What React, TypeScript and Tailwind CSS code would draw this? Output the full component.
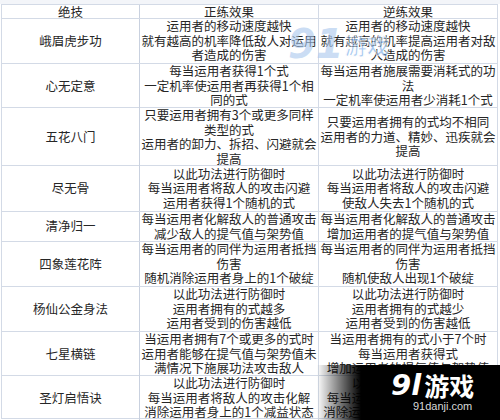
import React from 'react';

type Row = {
    name: string;
    zheng: string[];
    ni: string[];
    h: string;
};

const rows: Row[] = [
    {
        name: '峨眉虎步功',
        zheng: ['运用者的移动速度越快', '就有越高的机率降低敌人对运用', '者造成的伤害'],
        ni: ['运用者的移动速度越快', '就有越高的机率提高运用者对敌', '人造成的伤害'],
        h: 'h-[45px]',
    },
    {
        name: '心无定意',
        zheng: ['每当运用者获得1个式', '一定机率使运用者再获得1个相', '同的式'],
        ni: ['每当运用者施展需要消耗式的功', '法', '一定机率使运用者少消耗1个式'],
        h: 'h-[44px]',
    },
    {
        name: '五花八门',
        zheng: ['只要运用者拥有3个或更多同样', '类型的式', '运用者的卸力、拆招、闪避就会', '提高'],
        ni: ['只要运用者拥有的式均不相同', '运用者的力道、精妙、迅疾就会', '提高'],
        h: 'h-[58px]',
    },
    {
        name: '尽无骨',
        zheng: ['以此功法进行防御时', '每当运用者将敌人的攻击闪避', '运用者获得1个随机的式'],
        ni: ['以此功法进行防御时', '每当运用者将敌人的攻击闪避', '使敌人失去1个随机的式'],
        h: 'h-[46px]',
    },
    {
        name: '清净归一',
        zheng: ['每当运用者化解敌人的普通攻击', '减少敌人的提气值与架势值'],
        ni: ['每当运用者化解敌人的普通攻击', '增加运用者的提气值与架势值'],
        h: 'h-[30px]',
    },
    {
        name: '四象莲花阵',
        zheng: ['每当运用者的同伴为运用者抵挡', '伤害', '随机消除运用者身上的1个破绽'],
        ni: ['每当运用者的同伴为运用者抵挡', '伤害', '随机使敌人出现1个破绽'],
        h: 'h-[45px]',
    },
    {
        name: '杨仙公金身法',
        zheng: ['以此功法进行防御时', '运用者拥有的式越多', '运用者受到的伤害越低'],
        ni: ['以此功法进行防御时', '运用者拥有的式越少', '运用者受到的伤害越低'],
        h: 'h-[45px]',
    },
    {
        name: '七星横链',
        zheng: ['当运用者拥有7个或更多的式时', '运用者能够在提气值与架势值未', '满情况下施展功法攻击敌人'],
        ni: ['当运用者拥有的式小于7个时', '每当运用者获得式', '增加运用者的提气值与架势值'],
        h: 'h-[44px]',
    },
    {
        name: '圣灯启悟诀',
        zheng: ['以此功法进行防御时', '每当运用者将敌人的攻击化解', '消除运用者身上的1个减益状态'],
        ni: ['以此功法进行防御时', '每当运用者将敌人的攻击化解', '消除运用者身上的1个减益状态'],
        h: 'h-[43px]',
    },
];

function Cell({ lines }: { lines: string[] }) {
    return (
        <div className="flex flex-col items-center justify-center border-r border-[#d3dae6] text-center">
            {lines.map((line, i) => (
                <div key={i} className="whitespace-nowrap">
                    {line}
                </div>
            ))}
        </div>
    );
}

export default function App() {
    return (
        <div className="relative h-[420px] w-[500px] overflow-hidden bg-white font-['Noto_Sans_CJK_SC','Noto_Sans',sans-serif] text-[12.5px] leading-[14.5px] text-[#262626]">
            <div className="h-[4px] bg-[#f3f5f9]" />
            <div className="ml-[1px] w-[497px] border-b border-l border-[#d3dae6]">
                <div className="grid h-[14px] grid-cols-[138px_179px_179px] border-t border-[#d3dae6] leading-[13px]">
                    <div className="flex items-center justify-center border-r border-[#c9d1df]">绝技</div>
                    <div className="flex items-center justify-center border-r border-[#d3dae6]">正练效果</div>
                    <div className="flex items-center justify-center border-r border-[#d3dae6]">逆练效果</div>
                </div>
                {rows.map(row => (
                    <div
                        key={row.name}
                        className={`grid grid-cols-[138px_179px_179px] border-t border-[#d3dae6] ${row.h}`}
                    >
                        <div className="flex items-center justify-center border-r border-[#c9d1df]">
                            {row.name}
                        </div>
                        <Cell lines={row.zheng} />
                        <Cell lines={row.ni} />
                    </div>
                ))}
            </div>

            {/* faint watermark over the top rows */}
            <div className="pointer-events-none absolute left-[288px] top-[24px] flex items-center opacity-60">
                <span className="font-['DejaVu_Sans',sans-serif] text-[40px] font-bold italic leading-[40px] text-[#a9c8ee]">
                    91
                </span>
                <span className="ml-[1px] text-[22px] font-bold leading-[22px] text-[#6fa6e6] [-webkit-text-stroke:1px_#ffffff]">
                    游戏
                </span>
            </div>

            {/* corner logo */}
            <div className="pointer-events-none absolute bottom-0 right-0 flex h-[55px] w-[183px] bg-[linear-gradient(to_right,rgba(0,0,0,0),#000_24%)] pl-[74px]">
                <div className="flex flex-col items-center pt-[5px]">
                    <div className="flex items-center">
                        <span className="font-['DejaVu_Sans',sans-serif] text-[29px] font-bold italic leading-[30px] text-white">
                            9l
                        </span>
                        <span className="ml-[3px] text-[25px] font-bold leading-[30px] text-white">游戏</span>
                    </div>
                    <span className="ml-[20px] font-['Liberation_Sans',sans-serif] text-[11px] leading-[13px] text-[#d8d8d8]">
                        91danji.com
                    </span>
                </div>
            </div>
        </div>
    );
}
